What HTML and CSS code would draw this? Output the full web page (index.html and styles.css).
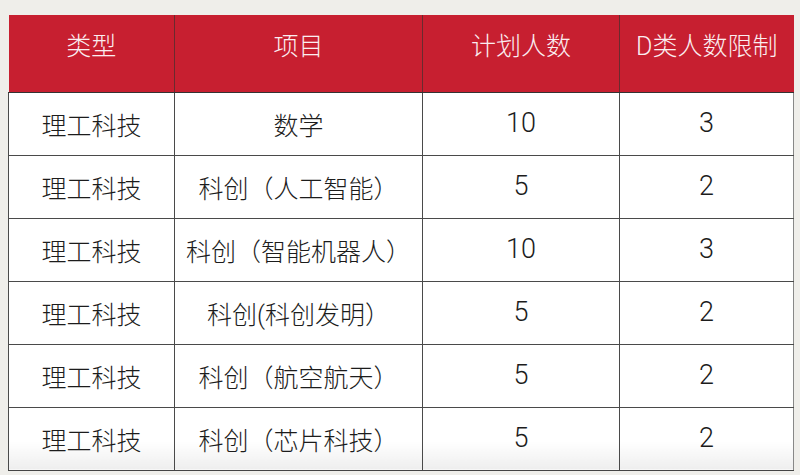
FILE: index.html
```html
<!DOCTYPE html>
<html lang="zh">
<head>
<meta charset="utf-8">
<link rel="stylesheet" href="styles.css">
</head>
<body>
<div class="page">
<table class="plan">
<colgroup>
<col class="c1"><col class="c2"><col class="c3"><col class="c4">
</colgroup>
<thead>
<tr><th>类型</th><th>项目</th><th>计划人数</th><th>D类人数限制</th></tr>
</thead>
<tbody>
<tr><td>理工科技</td><td>数学</td><td>10</td><td>3</td></tr>
<tr><td>理工科技</td><td>科创（人工智能）</td><td>5</td><td>2</td></tr>
<tr><td>理工科技</td><td>科创（智能机器人）</td><td>10</td><td>3</td></tr>
<tr><td>理工科技</td><td>科创(科创发明）</td><td>5</td><td>2</td></tr>
<tr><td>理工科技</td><td>科创（航空航天）</td><td>5</td><td>2</td></tr>
<tr class="last"><td>理工科技</td><td>科创（芯片科技）</td><td>5</td><td>2</td></tr>
</tbody>
</table>
</div>
</body>
</html>
```
FILE: styles.css
```css
html, body {
  margin: 0;
  padding: 0;
  background: #efeeea;
}
.page {
  width: 800px;
  height: 475px;
  padding: 15px 0 0 8px;
  box-sizing: border-box;
  overflow: hidden;
}
.plan {
  border-collapse: collapse;
  table-layout: fixed;
  width: 785px;
  font-family: Roboto, "Noto Sans CJK SC", sans-serif;
  font-size: 25px;
  font-weight: 300;
}
.c1 { width: 166px; }
.c2 { width: 248px; }
.c3 { width: 197px; }
.c4 { width: 174px; }
.plan th {
  background: #c71f30;
  color: #fbeef0;
  font-weight: 300;
  height: 77px;
  padding: 0 0 19px 0;
  box-sizing: border-box;
  border-left: 1.5px solid #6a2a2e;
  border-bottom: 1.5px solid #333;
  text-align: center;
  vertical-align: middle;
}
.plan th:first-child { border-left: none; }
.plan td {
  background: #ffffff;
  color: #1c1c1c;
  height: 63px;
  padding: 0;
  box-sizing: border-box;
  text-align: center;
  vertical-align: middle;
  border: 1.5px solid #4a4a4a;
  border-top: none;
}
.plan td:nth-child(n+3) {
  font-size: 27px;
  padding-bottom: 2px;
}
.plan td:nth-child(n+2) { border-left-color: #777; }
.plan td:last-child { border-right-color: #888; }
.plan tr.last td {
  background: linear-gradient(#ffffff 55%, #eeeeee);
  border-bottom-color: #444;
}
```
